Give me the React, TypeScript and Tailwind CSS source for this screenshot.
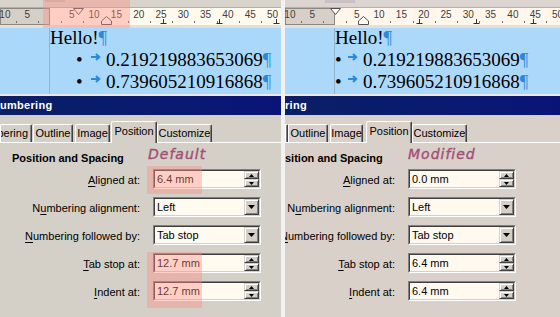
import type { ReactNode } from 'react';

const MM = 4.46; // ruler pixels per millimetre
const ORIGIN = 49.5; // page margin on the ruler

type TabDef = { label: string; cls: string; sel?: boolean };

type Cfg = {
  width: string;
  strip: string;
  stripMark: string;
  cream: string;
  margin: string;
  blue: string;
  body: string;
  field: string;
  first: number;
  hang: number;
  tabs: number[];
  bullet: string;
  title: string;
  pageTabs: TabDef[];
  heading: string;
  headingBox: string;
  note: string;
  labelCol: string;
  values: string[];
};

const LEFT: Cfg = {
  width: 'w-[281px]',
  strip: 'bg-[#d8d4cc]',
  stripMark: 'ml-[45px] h-[2px] w-[20px] bg-[#c2bdb5]',
  cream: 'bg-[#fffaee]',
  margin: 'bg-[#d4d0c8]',
  blue: 'bg-[#aad8fa]',
  body: 'bg-[#d4d0c8]',
  field: 'bg-[#fffbf0]',
  first: 6.4,
  hang: 12.7,
  tabs: [25.4, 38.1, 50.8],
  bullet: 'ml-[26px] w-[14px]',
  title: 'umbering',
  pageTabs: [
    { label: 'bering', cls: 'w-[32px] justify-end pr-[3px]' },
    { label: 'Outline', cls: 'ml-[1px] w-[40px] justify-center' },
    { label: 'Image', cls: 'ml-[2px] w-[35px] justify-center' },
    { label: 'Position', cls: 'ml-[1px] w-[46px] justify-center', sel: true },
    { label: 'Customize', cls: 'w-[55px] justify-center' },
  ],
  heading: 'Position and Spacing',
  headingBox: 'w-[148px] pl-[12px]',
  note: 'Default',
  labelCol: 'w-[140px]',
  values: ['6.4 mm', 'Left', 'Tab stop', '12.7 mm', '12.7 mm'],
};

const RIGHT: Cfg = {
  width: 'w-[275px]',
  strip: 'bg-[#dcd4d0]',
  stripMark: 'ml-[40px] h-[3px] w-[30px] bg-[#c9c1c4]',
  cream: 'bg-[#fff6ec]',
  margin: 'bg-[#d8cfc9]',
  blue: 'bg-[#acd8fa]',
  body: 'bg-[#d9d0c9]',
  field: 'bg-[#fff9f0]',
  first: 0,
  hang: 6.4,
  tabs: [19.05, 31.75, 44.45],
  bullet: 'ml-0 w-[12px]',
  title: 'ring',
  pageTabs: [
    { label: '', cls: 'w-[3px]' },
    { label: 'Outline', cls: 'w-[40px] justify-center' },
    { label: 'Image', cls: 'ml-[2px] w-[33px] justify-center' },
    { label: 'Position', cls: 'ml-[3px] w-[46px] justify-center', sel: true },
    { label: 'Customize', cls: 'w-[55px] justify-center' },
  ],
  heading: 'sition and Spacing',
  headingBox: 'w-[123px]',
  note: 'Modified',
  labelCol: 'w-[110px]',
  values: ['0.0 mm', 'Left', 'Tab stop', '6.4 mm', '6.4 mm'],
};

const RAISED =
  'border border-t-[#d4d0c8] border-l-[#d4d0c8] border-b-[#404040] border-r-[#404040] shadow-[inset_1px_1px_0_#ffffff,inset_-1px_-1px_0_#808080]';

function Ruler({ cfg }: { cfg: Cfg }) {
  const nums = [-2, -1, 1, 2, 3, 4, 5, 6, 7, 8, 9, 10];
  const mids = [-2, -1, 0, 1, 2, 3, 4, 5, 6, 7, 8, 9];
  return (
    <div className="shrink-0 border-t border-[#b4b0a8]">
      <div className={`relative flex h-[17px] ${cfg.cream}`}>
        <div className={`h-full w-[50px] shrink-0 border border-[#8c8880] ${cfg.margin}`} />
        <div className="absolute inset-0 text-[10px] leading-[12px] text-[#404040]">
          {nums.map((k) => (
            <span
              key={k}
              className="absolute top-[1px] w-[20px] text-center"
              style={{ left: ORIGIN + k * 5 * MM - 10 }}
            >
              {Math.abs(k) * 5}
            </span>
          ))}
          {mids.map((k) => (
            <span
              key={k}
              className="absolute top-[13px] h-[2px] w-px bg-[#707070]"
              style={{ left: Math.round(ORIGIN + (k + 0.5) * 5 * MM) }}
            />
          ))}
          {cfg.tabs.map((t) => (
            <svg
              key={t}
              width="7"
              height="5"
              className="absolute top-[11px]"
              style={{ left: Math.round(ORIGIN + t * MM) - 3 }}
            >
              <path d="M3.5 0v4M0.5 4.5h6" stroke="#303030" strokeWidth="1" fill="none" />
            </svg>
          ))}
          <svg
            width="11"
            height="8"
            className="absolute top-0"
            style={{ left: Math.round(ORIGIN + cfg.first * MM) - 5 }}
          >
            <polygon points="0.5,0.5 10.5,0.5 5.5,6.5" fill="#fffaf2" stroke="#505050" />
          </svg>
          <svg
            width="11"
            height="9"
            className="absolute top-[8px]"
            style={{ left: Math.round(ORIGIN + cfg.hang * MM) - 5 }}
          >
            <polygon points="5.5,0.5 10.5,5 10.5,8.5 0.5,8.5 0.5,5" fill="#fffaf2" stroke="#505050" />
          </svg>
        </div>
      </div>
      <div className="h-[3px] bg-[#e4e0d8]" />
    </div>
  );
}

function Pil() {
  return <span className="text-[#2b8ad8]">¶</span>;
}

function Arrow() {
  return (
    <svg width="11" height="8" className="mb-[6px] ml-[1px]">
      <path d="M0 4h8M5 1l3.2 3-3.2 3" stroke="#2b8ad8" strokeWidth="2.1" fill="none" />
    </svg>
  );
}

function Doc({ cfg }: { cfg: Cfg }) {
  const nums = ['0.219219883653069', '0.739605210916868'];
  return (
    <div
      className={`flex h-[66px] shrink-0 ${cfg.blue} font-['Liberation_Serif','Times_New_Roman',serif] text-[19px] leading-[22px] text-black`}
    >
      <div className="w-[49px] shrink-0" />
      <div className="flex-1 whitespace-nowrap border-l border-[#94b4cc]">
        <div className="-mt-px">
          <div className="flex h-[22px] items-center">
            Hello!
            <Pil />
          </div>
          {nums.map((n) => (
            <div key={n} className="flex h-[22px] items-center">
              <span className={`${cfg.bullet} shrink-0`}>•</span>
              <span className="flex w-[16px] shrink-0 items-center">
                <Arrow />
              </span>
              <span>{n}</span>
              <Pil />
            </div>
          ))}
        </div>
      </div>
    </div>
  );
}

function Tab({ tab, body }: { tab: TabDef; body: string }) {
  return (
    <div
      className={`${tab.cls} flex shrink-0 items-center overflow-hidden whitespace-nowrap rounded-t-[2px] border-l border-r border-t border-l-white border-r-[#404040] border-t-white shadow-[inset_-1px_0_0_#808080] ${
        tab.sel ? `relative -mb-px h-[22px] pb-[2px] ${body}` : 'h-[18px]'
      }`}
    >
      {tab.label}
    </div>
  );
}

function Spin() {
  return (
    <div className="flex w-[15px] shrink-0 flex-col">
      <div className={`flex h-[8px] items-center justify-center bg-[#d4d0c8] ${RAISED}`}>
        <svg width="5" height="3">
          <polygon points="2.5,0 5,3 0,3" fill="#000" />
        </svg>
      </div>
      <div className={`flex h-[8px] items-center justify-center bg-[#d4d0c8] ${RAISED}`}>
        <svg width="5" height="3">
          <polygon points="0,0 5,0 2.5,3" fill="#000" />
        </svg>
      </div>
    </div>
  );
}

function Drop() {
  return (
    <div className={`flex h-[16px] w-[15px] shrink-0 items-center justify-center bg-[#d4d0c8] ${RAISED}`}>
      <svg width="7" height="4">
        <polygon points="0,0 7,0 3.5,4" fill="#000" />
      </svg>
    </div>
  );
}

function Field({ cfg, label, value, drop }: { cfg: Cfg; label: ReactNode; value: string; drop?: boolean }) {
  return (
    <div className="flex h-[20px] items-start">
      <div className={`${cfg.labelCol} flex shrink-0 justify-end whitespace-nowrap pt-[5px] leading-[13px]`}>
        <span>{label}</span>
      </div>
      <div className="ml-[13px] flex h-[20px] w-[108px] shrink-0 border border-b-white border-l-[#808080] border-r-white border-t-[#808080]">
        <div
          className={`flex flex-1 border border-b-[#d4d0c8] border-l-[#404040] border-r-[#d4d0c8] border-t-[#404040] ${cfg.field}`}
        >
          <span className="flex-1 pl-[2px] pt-[2px] leading-[13px]">{value}</span>
          {drop ? <Drop /> : <Spin />}
        </div>
      </div>
    </div>
  );
}

function U({ children }: { children: ReactNode }) {
  return <span className="underline underline-offset-[2px]">{children}</span>;
}

function Panel({ cfg, children }: { cfg: Cfg; children?: ReactNode }) {
  const v = cfg.values;
  return (
    <div className={`relative flex ${cfg.width} shrink-0 flex-col overflow-hidden`}>
      <div className={`flex h-[7px] shrink-0 ${cfg.strip}`}>
        <div className={cfg.stripMark} />
      </div>
      <Ruler cfg={cfg} />
      <Doc cfg={cfg} />
      <div className="h-[2px] shrink-0 bg-[#ece8e0]" />

      <div className="h-[19px] shrink-0 bg-gradient-to-r from-[#0a1f66] to-[#0a1478] text-[11px] font-bold leading-[19px] tracking-[0.3px] text-white">
        {cfg.title}
      </div>

      <div className={`flex flex-1 flex-col pt-[7px] text-[11px] text-black ${cfg.body}`}>
        <div className="flex h-[21px] shrink-0 items-end border-b border-white leading-[17px]">
          {cfg.pageTabs.map((t) => (
            <Tab key={t.label + t.cls} tab={t} body={cfg.body} />
          ))}
        </div>

        <div className="flex h-[22px] shrink-0 items-start">
          <div className={`${cfg.headingBox} shrink-0 whitespace-nowrap pt-[9px] font-bold leading-[13px]`}>
            {cfg.heading}
          </div>
          <div className="whitespace-nowrap pt-[3px] font-['DejaVu_Sans',sans-serif] text-[14px] italic leading-[17px] tracking-[1px] text-[#a24f76] [-webkit-text-stroke:0.4px_#a24f76]">
            {cfg.note}
          </div>
        </div>

        <div className="mt-[4px] flex flex-col gap-[8px]">
          <Field cfg={cfg} label={<><U>A</U>ligned at:</>} value={v[0]} />
          <Field cfg={cfg} label={<>N<U>u</U>mbering alignment:</>} value={v[1]} drop />
          <Field cfg={cfg} label={<><U>N</U>umbering followed by:</>} value={v[2]} drop />
          <Field cfg={cfg} label={<><U>T</U>ab stop at:</>} value={v[3]} />
          <Field cfg={cfg} label={<><U>I</U>ndent at:</>} value={v[4]} />
        </div>
      </div>
      {children}
    </div>
  );
}

export default function App() {
  return (
    <div className="flex h-[317px] w-[560px] overflow-hidden bg-[#f4f4f4] font-['Liberation_Sans',Arial,sans-serif]">
      <Panel cfg={LEFT}>
        {/* highlights over the changed values */}
        <div className="absolute left-[43px] top-0 h-[28px] w-[87px] bg-[rgba(255,140,130,0.4)]" />
        <div className="absolute left-[147px] top-[166px] h-[28px] w-[55px] bg-[rgba(255,140,130,0.4)]" />
        <div className="absolute left-[147px] top-[252px] h-[56px] w-[55px] bg-[rgba(255,140,130,0.4)]" />
      </Panel>
      <div className="w-[4px] shrink-0 bg-[#f2f2f2]" />
      <Panel cfg={RIGHT} />
    </div>
  );
}
